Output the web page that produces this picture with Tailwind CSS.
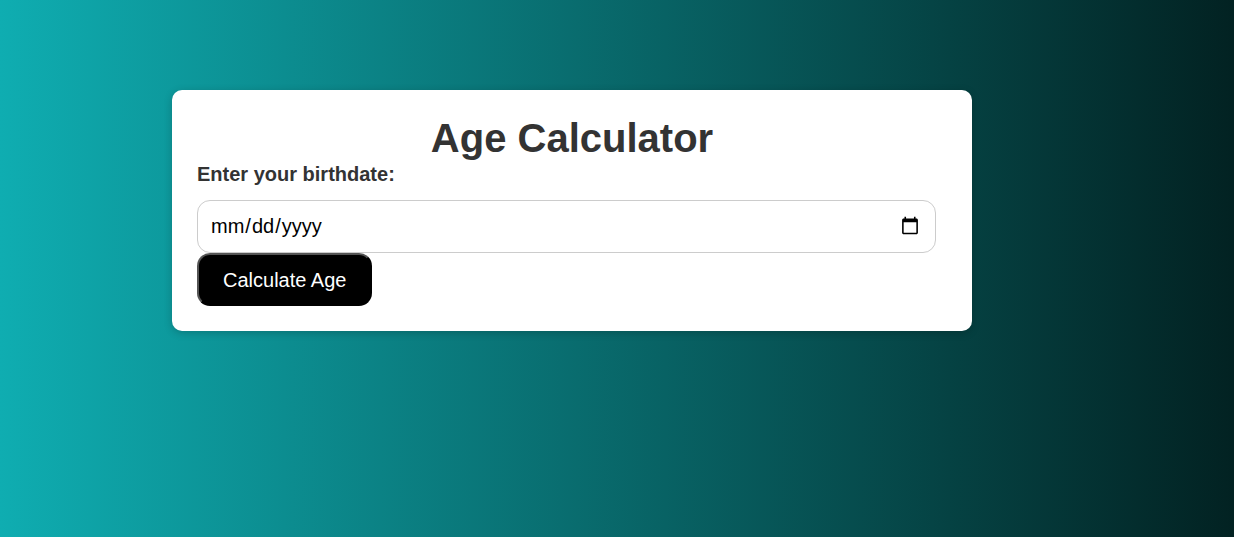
<!DOCTYPE html>
<html lang="en">
<head>
<meta charset="utf-8">
<meta name="viewport" content="width=device-width, initial-scale=1">
<title>Age Calculator</title>
<script src="https://cdn.jsdelivr.net/npm/@tailwindcss/browser@4"></script>
</head>
<body class="min-h-screen bg-linear-to-r/srgb from-[#0fadb1] to-[#022222] px-4 pt-[90px] pb-8 font-['Liberation_Sans',Arial,sans-serif] text-xl text-[#333]">
<main class="mx-auto w-full max-w-[890px]">
<form class="w-full max-w-[800px] rounded-[10px] bg-white p-[25px] shadow-[0_2px_8px_rgba(0,0,0,0.2)]">
<h1 class="text-center text-[40px] leading-[46px] font-bold">Age Calculator</h1>
<label for="birthdate" class="block pt-px pb-[14px] leading-6 font-bold">Enter your birthdate:</label>
<div class="pr-[11px]">
<input id="birthdate" type="date" class="block h-[53px] w-full rounded-[13px] border border-[#ccc] pr-[13px] pb-[2px] pl-3 text-xl text-black">
</div>
<button type="button" class="block h-[53px] rounded-[13px] border-2 border-black bg-black px-6 text-xl text-white [border-style:outset]">Calculate Age</button>
</form>
</main>
</body>
</html>
